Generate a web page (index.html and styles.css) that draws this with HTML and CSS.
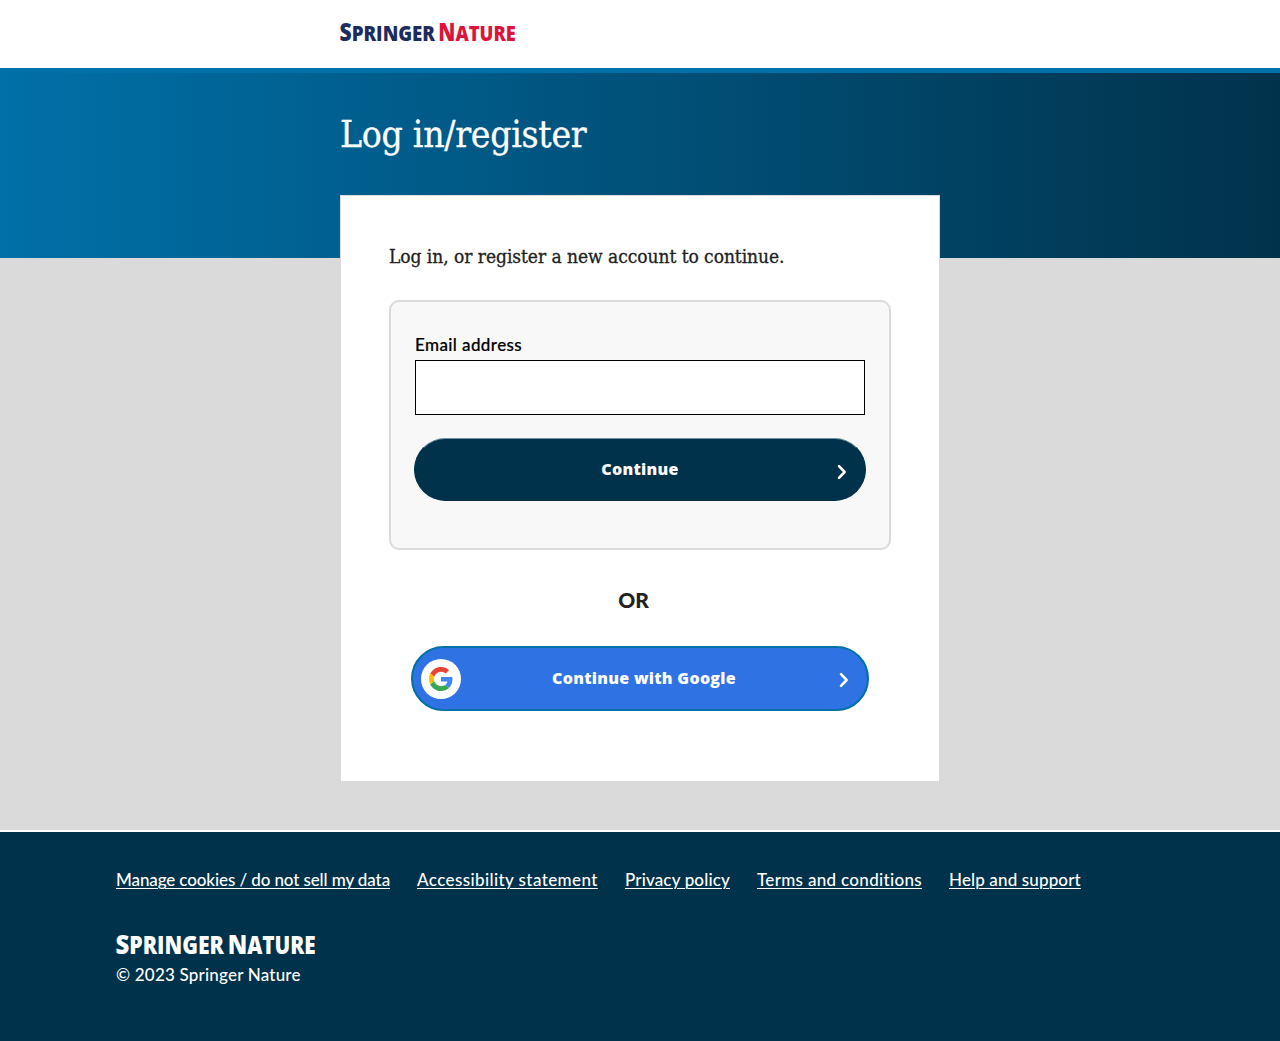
FILE: index.html
```html
<!DOCTYPE html>
<html lang="en">
<head>
<meta charset="utf-8">
<title>Log in/register - Springer Nature</title>
<link rel="stylesheet" href="styles.css">
</head>
<body>
<header class="header">
  <svg class="header-logo" width="180" height="36" viewBox="0 0 180 36" role="img" aria-label="Springer Nature">
    <g class="logo-type">
      <text class="navy" x="-0.5" y="26" textLength="95.5" lengthAdjust="spacingAndGlyphs"><tspan class="initial">S</tspan>PRINGER</text>
      <text class="red" x="98.3" y="26" textLength="77.5" lengthAdjust="spacingAndGlyphs"><tspan class="initial">N</tspan>ATURE</text>
    </g>
  </svg>
</header>
<section class="banner">
  <h1 class="title">Log in/register</h1>
</section>
<main class="main">
  <div class="card">
    <h2 class="intro">Log in, or register a new account to continue.</h2>
    <form class="panel">
      <label class="label" for="email">Email address</label>
      <input class="input" id="email" type="email">
      <button class="button" type="button">
        <span class="button-text">Continue</span>
        <svg class="chevron" width="10" height="16" viewBox="0 0 10 16"><path d="M2 2.2 7.6 8 2 13.8"/></svg>
      </button>
    </form>
    <p class="or">OR</p>
    <button class="button google" type="button">
      <span class="google-badge">
        <svg width="24" height="24" viewBox="0 0 48 48">
          <path fill="#ea4335" d="M24 9.5c3.54 0 6.71 1.22 9.21 3.6l6.85-6.85C35.9 2.38 30.47 0 24 0 14.62 0 6.51 5.38 2.56 13.22l7.98 6.19C12.43 13.72 17.74 9.5 24 9.5z"/>
          <path fill="#4285f4" d="M46.98 24.55c0-1.57-.15-3.09-.38-4.55H24v9.02h12.94c-.58 2.96-2.26 5.48-4.78 7.18l7.73 6c4.51-4.18 7.09-10.36 7.09-17.65z"/>
          <path fill="#fbbc05" d="M10.53 28.59c-.48-1.45-.76-2.99-.76-4.59s.27-3.14.76-4.59l-7.98-6.19C.92 16.46 0 20.12 0 24c0 3.88.92 7.54 2.56 10.78l7.97-6.19z"/>
          <path fill="#34a853" d="M24 48c6.48 0 11.93-2.13 15.89-5.81l-7.73-6c-2.15 1.45-4.92 2.3-8.16 2.3-6.26 0-11.57-4.22-13.47-9.91l-7.98 6.19C6.51 42.62 14.62 48 24 48z"/>
        </svg>
      </span>
      <span class="button-text google-text">Continue with Google</span>
      <svg class="chevron" width="10" height="16" viewBox="0 0 10 16"><path d="M2 2.2 7.6 8 2 13.8"/></svg>
    </button>
  </div>
</main>
<footer class="footer">
  <nav class="links">
    <a class="link link-cookies" href="#">Manage cookies / do not sell my data</a>
    <a class="link link-access" href="#">Accessibility statement</a>
    <a class="link link-privacy" href="#">Privacy policy</a>
    <a class="link link-terms" href="#">Terms and conditions</a>
    <a class="link link-help" href="#">Help and support</a>
  </nav>
  <svg class="footer-logo" width="204.5" height="41" viewBox="0 0 180 36" role="img" aria-label="Springer Nature">
    <g class="logo-type">
      <text x="-0.5" y="26" textLength="95.5" lengthAdjust="spacingAndGlyphs"><tspan class="initial">S</tspan>PRINGER</text>
      <text x="98.3" y="26" textLength="77.5" lengthAdjust="spacingAndGlyphs"><tspan class="initial">N</tspan>ATURE</text>
    </g>
  </svg>
  <p class="copyright">© 2023 Springer Nature</p>
</footer>
</body>
</html>
```
FILE: styles.css
```css
* { box-sizing: border-box; }
body {
  margin: 0;
  background: #dadada;
  color: #222;
  font-family: Lato, "Open Sans", sans-serif;
  font-size: 17px;
}
h1, h2, p { margin: 0; font-weight: 400; }

.header {
  height: 73px;
  padding: 15px 0 0 340px;
  background: #fff;
  border-bottom: 5px solid #0070a8;
}
.header-logo, .footer-logo { display: block; overflow: visible; }
.logo-type {
  fill: #fff;
  font-family: "Open Sans", sans-serif;
  font-size: 21.3px;
  font-weight: 800;
}
.initial { font-size: 24px; }
.navy { fill: #1b2c5d; }
.red { fill: #dc143c; }

.banner {
  height: 185px;
  padding: 38px 0 0 340px;
  background: linear-gradient(90deg, #0070a8, #01324b);
}
.title {
  color: #fff;
  font: 37px/48px "DejaVu Serif Condensed", "DejaVu Serif", serif;
  letter-spacing: -.3px;
  -webkit-text-stroke: .3px;
}

.main { display: flex; justify-content: center; height: 572px; }
.card {
  width: 600px;
  height: 587px;
  margin-top: -63px;
  padding: 48px;
  background: #fff;
  border: 1px solid #dadada;
}
.intro {
  height: 56px;
  font: 19px/24px "DejaVu Serif Condensed", "DejaVu Serif", serif;
  letter-spacing: -.04px;
  white-space: nowrap;
  -webkit-text-stroke: .3px;
}
.panel {
  height: 250px;
  padding: 31px 24px 0;
  background: #f8f8f8;
  border: 2px solid #dadada;
  border-radius: 10px;
}
.label {
  display: block;
  height: 27px;
  color: #000;
  font-size: 17px;
  font-weight: 500;
  letter-spacing: .4px;
  line-height: 23px;
  -webkit-text-stroke: .2px;
}
.input {
  display: block;
  width: 100%;
  height: 55px;
  border: 1px solid #000;
  background: #fff;
}
.button {
  display: flex;
  align-items: center;
  width: 452px;
  height: 63px;
  margin: 23px 0 0 -1px;
  padding: 0 18px 0 0;
  border: 1px solid #01324b;
  border-top-color: #6f929c;
  border-radius: 32px;
  background: #01324b;
  color: #fff;
  font: 800 16px/24px "Open Sans", sans-serif;
}
.button-text { flex: 1; padding: 0 0 2px 28px; letter-spacing: .28px; text-align: center; }
.chevron { margin-top: 4px; fill: none; stroke: #fff; stroke-width: 2.6; stroke-linecap: round; stroke-linejoin: round; }
.or {
  margin: 34px 0 0 -13px;
  font-size: 21px;
  font-weight: 900;
  line-height: 32px;
  text-align: center;
}
.google {
  width: 458px;
  height: 65px;
  margin: 30px 0 0 22px;
  padding: 0 18px 0 8px;
  background: #2f72e4;
  border: 2px solid #0070a8;
  border-radius: 33px;
}
.google .chevron { margin-top: 2px; }
.google-badge {
  display: flex;
  align-items: center;
  justify-content: center;
  width: 40px;
  height: 40px;
  border-radius: 50%;
  background: #fff;
}
.google-text { padding: 0 12px 2px 0; }

.footer {
  height: 211px;
  padding: 36px 116px 0;
  background: #01324b;
  border-top: 2px solid #fff;
  color: #fff;
}
.links { display: flex; gap: 27px; height: 56px; line-height: 24px; }
.link { color: #fff; font-weight: 500; text-decoration: underline; text-underline-offset: 2px; text-decoration-thickness: 1px; white-space: nowrap; }
.link-cookies { width: 274px; letter-spacing: -.11px; }
.link-access { width: 181px; letter-spacing: .4px; }
.link-privacy { width: 105px; letter-spacing: .15px; }
.link-terms { width: 165px; letter-spacing: .32px; }
.link-help { width: 132px; letter-spacing: .14px; }
.copyright { margin-top: -2px; font-weight: 500; letter-spacing: .2px; line-height: 24px; }
```
